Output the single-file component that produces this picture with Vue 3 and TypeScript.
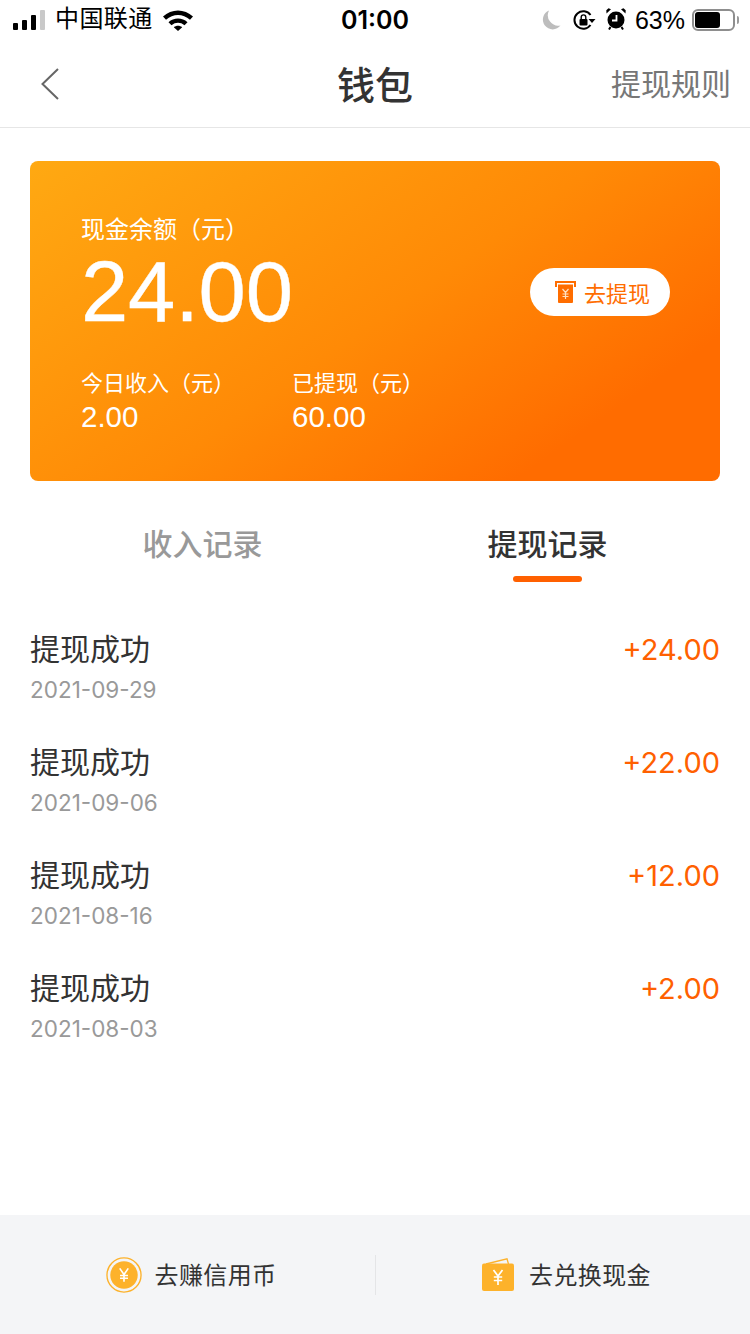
<script setup lang="ts">
interface Row { date: string; amount: string }
const rows: Row[] = [
  { date: '2021-09-29', amount: '+24.00' },
  { date: '2021-09-06', amount: '+22.00' },
  { date: '2021-08-16', amount: '+12.00' },
  { date: '2021-08-03', amount: '+2.00' },
]
</script>

<template>
  <div class="page">
    <header class="status">
      <div class="st-left">
        <div class="signal"><i class="b1"></i><i class="b2"></i><i class="b3"></i><i class="b4"></i></div>
        <span class="carrier">中国联通</span>
        <svg class="wifi" width="30" height="22" viewBox="0 0 30 22">
          <path d="M0 7.500C8.500-.5 21.500-.5 30 7.500l-3 3.200C19.800 4.300 10.200 4.300 3 10.700Z" fill="#000"/>
          <path d="M5.500 13.200C10.700 8.400 19.300 8.400 24.500 13.200l-3 3.100C17.600 13 12.400 13 8.500 16.300Z" fill="#000"/>
          <path d="M10.800 18.200c2.500-2 5.900-2 8.400 0L15 22Z" fill="#000"/>
        </svg>
      </div>
      <div class="clock">01:00</div>
      <div class="st-right">
        <svg class="moon" width="20" height="22" viewBox="0 0 20 22"><path d="M8 1.500A9.800 9.800 0 1 0 19.500 16.500 10.500 10.500 0 0 1 8 1.500Z" fill="#bdbdbd"/></svg>
        <svg class="lock" width="24" height="22" viewBox="0 0 24 22">
          <path d="M18.500 16A8.800 8.800 0 1 1 18.500 6" fill="none" stroke="#000" stroke-width="2"/>
          <path d="M16.500 10h7l-3.500 4Z" fill="#000"/>
          <rect x="7.500" y="10" width="8" height="6.500" rx="1" fill="#000"/>
          <path d="M9.200 10V8.200a2.300 2.300 0 0 1 4.600 0V10" fill="none" stroke="#000" stroke-width="1.400"/>
        </svg>
        <svg class="alarm" width="22" height="24" viewBox="0 0 22 24">
          <circle cx="11" cy="13" r="8.500" fill="#000"/>
          <path d="M1.500 6.500 6 2.300 3.500 1.300 1.300 3.300Z M20.500 6.500 16 2.300l2.500-1 2.200 2Z" fill="#000"/>
          <path d="M11.500 8v5.500H7" fill="none" stroke="#fff" stroke-width="1.800"/>
          <path d="M5.500 20l-1.500 2.500M16.500 20l1.500 2.500" stroke="#000" stroke-width="2"/>
        </svg>
        <span class="pct">63%</span>
        <div class="battery"><div class="charge"></div></div>
        <i class="nub"></i>
      </div>
    </header>

    <nav class="nav">
      <svg class="back" width="20" height="32" viewBox="0 0 20 32"><path d="M18 1 2.500 16 18 31" fill="none" stroke="#666" stroke-width="2"/></svg>
      <h1 class="title">钱包</h1>
      <span class="rule">提现规则</span>
    </nav>

    <section class="card">
      <div class="card-main">
        <div class="balance">
          <div class="label">现金余额（元）</div>
          <div class="big">24.00</div>
        </div>
        <button class="go">
          <svg width="21" height="22" viewBox="0 0 21 22">
            <path d="M0 0h21v6h-2V2H2v4H0Z" fill="#ff6d00"/>
            <path d="M3 3.500h15V21a1 1 0 0 1-1 1H4a1 1 0 0 1-1-1Z" fill="#ff6d00"/>
            <path d="M7.500 8l3 3.500 3-3.500M10.500 11.500V18M7.500 13h6M7.500 15.500h6" fill="none" stroke="#ffe0c2" stroke-width="1.200"/>
          </svg>
          <span>去提现</span>
        </button>
      </div>
      <div class="stats">
        <div class="stat today"><div class="s-label">今日收入（元）</div><div class="s-val">2.00</div></div>
        <div class="stat"><div class="s-label">已提现（元）</div><div class="s-val">60.00</div></div>
      </div>
    </section>

    <div class="tabs">
      <div class="tab">收入记录</div>
      <div class="tab active">提现记录</div>
    </div>

    <ul class="list">
      <li v-for="r in rows" :key="r.date" class="row">
        <div>
          <div class="r-title">提现成功</div>
          <div class="r-date">{{ r.date }}</div>
        </div>
        <div class="r-amount">{{ r.amount }}</div>
      </li>
    </ul>

    <footer class="foot">
      <div class="f-item">
        <svg width="36" height="36" viewBox="0 0 38 38">
          <circle cx="19" cy="19" r="18" fill="none" stroke="#fdb22b" stroke-width="1.400"/>
          <circle cx="19" cy="19" r="14.500" fill="#fdb22b"/>
          <path d="M14.500 12l4.500 6.500L23.500 12M19 18.500V26M14.800 19.500h8.400M14.800 22.500h8.400" fill="none" stroke="#fff" stroke-width="1.700"/>
        </svg>
        <span>去赚信用币</span>
      </div>
      <div class="f-item f-second">
        <svg width="32" height="33" viewBox="0 0 32 33">
          <path d="M4 6 25 .8 26.500 6" fill="none" stroke="#fdb22b" stroke-width="1.300"/>
          <rect x="0" y="5.500" width="32" height="27.500" rx="2" fill="#fdb22b"/>
          <path d="M11.500 12l4.500 6 4.500-6M16 18V27M11.800 19h8.400M11.800 22.500h8.400" fill="none" stroke="#fff" stroke-width="1.700"/>
        </svg>
        <span>去兑换现金</span>
      </div>
    </footer>
  </div>
</template>

<style>
body { background: #fff; }
</style>

<style scoped>
.page {
  width: 750px;
  height: 1334px;
  display: flex;
  flex-direction: column;
  font-family: "Liberation Sans", "Noto Sans CJK SC", sans-serif;
  background: #fff;
  overflow: hidden;
}
.status {
  height: 40px;
  flex: none;
  display: grid;
  grid-template-columns: 1fr auto 1fr;
  align-items: center;
  color: #000;
}
.st-left { display: flex; align-items: center; padding-left: 13px; }
.signal { display: flex; align-items: flex-end; gap: 4px; height: 20px; }
.signal i { width: 5px; display: block; border-radius: 1px; background: #000; }
.signal .b1 { height: 7px; }
.signal .b2 { height: 10px; }
.signal .b3 { height: 15px; }
.signal .b4 { height: 20px; background: #c9c9c9; }
.carrier { margin-left: 10px; font-size: 24px; letter-spacing: .4px; line-height: 30px; padding-bottom: 2px; }
.wifi { margin-left: 10px; }
.clock { font-family: Inter, "Liberation Sans", sans-serif; font-size: 25px; font-weight: 600; }
.st-right { display: flex; align-items: center; justify-content: flex-end; padding-right: 11px; }
.moon { margin-right: 11px; }
.lock { margin-right: 9px; }
.alarm { margin-right: 8px; margin-top: -2px; }
.pct { font-size: 25px; margin-right: 7px; }
.battery {
  width: 43px;
  height: 22px;
  box-sizing: border-box;
  border: 2px solid #8e8e8e;
  border-radius: 6px;
  padding: 1px;
}
.charge { width: 25px; height: 16px; background: #000; border-radius: 3px; }
.nub { width: 2px; height: 8px; background: #9a9a9a; margin-left: 2px; border-radius: 0 2px 2px 0; }
.nav {
  height: 88px;
  flex: none;
  box-sizing: border-box;
  border-bottom: 1px solid #e6e6e6;
  display: grid;
  grid-template-columns: 1fr auto 1fr;
  align-items: center;
  padding: 0 19px 0 40px;
}
.title { margin: 0 21px 3px 0; font-size: 38px; font-weight: 500; color: #333; }
.rule { justify-self: end; font-size: 30px; color: #777; margin-bottom: 3px; }
.card {
  flex: none;
  margin: 33px 30px 0;
  height: 320px;
  border-radius: 8px;
  box-sizing: border-box;
  padding: 52px 50px 0 51px;
  color: #fff;
  background: linear-gradient(145deg, #ffa912 0%, #ff8a06 50%, #ff6c00 82%, #ff6c00 100%);
}
.card-main { display: flex; justify-content: space-between; align-items: flex-end; }
.label { font-size: 24px; line-height: 34px; }
.big { font-size: 85px; line-height: 86px; margin-top: 2px; letter-spacing: -.2px; -webkit-text-stroke: .4px #fff; }
.go {
  width: 140px;
  height: 48px;
  margin-bottom: 19px;
  border: 0;
  padding: 0 0 0 25px;
  border-radius: 24px;
  background: #fff;
  color: #ff6d00;
  font: inherit;
  font-size: 22px;
  display: flex;
  align-items: center;
  gap: 8px;
}
.stats { display: flex; margin-top: 32px; }
.stat { font-size: 22px; }
.today { width: 211px; }
.s-label { line-height: 34px; }
.s-val { font-size: 29.500px; line-height: 32px; }
.tabs { flex: none; display: flex; height: 101px; padding: 0 30px; }
.tab {
  position: relative;
  width: 345px;
  text-align: center;
  font-size: 30px;
  line-height: 34px;
  padding-top: 47px;
  font-weight: 500;
  color: #999;
  box-sizing: border-box;
}
.tab.active { color: #333; }
.tab.active::after {
  content: "";
  position: absolute;
  left: 138px;
  top: 95px;
  width: 69px;
  height: 6px;
  border-radius: 3px;
  background: #ff6000;
}
.list { flex: 1; margin: 0; padding: 0 30px; list-style: none; }
.row { height: 113px; padding-top: 48px; box-sizing: border-box; display: flex; justify-content: space-between; }
.r-title { font-size: 30px; line-height: 40px; color: #333; }
.r-date { font-family: Inter, "Liberation Sans", sans-serif; font-size: 22.500px; line-height: 30px; margin-top: 5px; color: #999; }
.r-amount { font-family: Inter, "Liberation Sans", sans-serif; font-size: 29px; line-height: 40px; color: #ff6000; }
.foot {
  flex: none;
  height: 119px;
  background: #f4f5f7;
  display: grid;
  grid-template-columns: 1fr 1fr;
  align-items: center;
}
.f-item {
  height: 40px;
  display: flex;
  align-items: center;
  justify-content: center;
  gap: 13px;
  font-size: 24px;
  letter-spacing: .4px;
  color: #333;
  padding-left: 7px;
}
.f-item span { padding-bottom: 3px; }
.f-second { border-left: 1px solid #e4e5e7; gap: 15px; }
</style>
